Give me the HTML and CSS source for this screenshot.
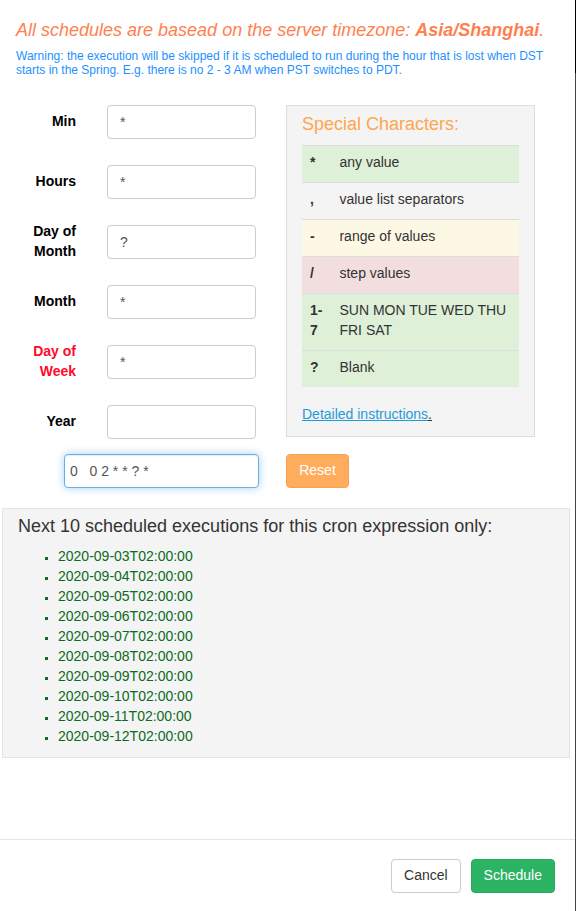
FILE: index.html
```html
<!DOCTYPE html>
<html>
<head>
<meta charset="utf-8">
<title>Cron schedule</title>
<link rel="stylesheet" href="styles.css">
</head>
<body>
<div class="page">
  <div class="modal">
    <div class="modal-body">
      <p class="tz">All schedules are basead on the server timezone: <b>Asia/Shanghai</b>.</p>
      <p class="warn">Warning: the execution will be skipped if it is scheduled to run during the hour that is lost when DST starts in the Spring. E.g. there is no 2 - 3 AM when PST switches to PDT.</p>

      <div class="editor">
        <div class="fields">
          <div class="field"><label class="lbl">Min</label><input class="box" value="*"></div>
          <div class="field"><label class="lbl">Hours</label><input class="box" value="*"></div>
          <div class="field"><label class="lbl">Day of Month</label><input class="box" value="?"></div>
          <div class="field"><label class="lbl">Month</label><input class="box" value="*"></div>
          <div class="field"><label class="lbl dow">Day of Week</label><input class="box" value="*"></div>
          <div class="field"><label class="lbl">Year</label><input class="box" value=""></div>
        </div>

        <div class="special">
          <h3 class="special-title">Special Characters:</h3>
          <table class="chars">
            <tr class="ok"><td class="sym">*</td><td>any value</td></tr>
            <tr><td class="sym">,</td><td>value list separators</td></tr>
            <tr class="warnrow"><td class="sym">-</td><td>range of values</td></tr>
            <tr class="bad"><td class="sym">/</td><td>step values</td></tr>
            <tr class="ok"><td class="sym">1-7</td><td>SUN MON TUE WED THU FRI SAT</td></tr>
            <tr class="ok"><td class="sym">?</td><td>Blank</td></tr>
          </table>
          <a class="doc-link" href="#">Detailed instructions<span class="dot">.</span></a>
        </div>
      </div>

      <div class="expr-row">
        <input class="expr" value="0   0 2 * * ? *">
        <button class="btn btn-reset">Reset</button>
      </div>

      <div class="next">
        <h3 class="next-title">Next 10 scheduled executions for this cron expression only:</h3>
        <ul class="runs">
          <li>2020-09-03T02:00:00</li>
          <li>2020-09-04T02:00:00</li>
          <li>2020-09-05T02:00:00</li>
          <li>2020-09-06T02:00:00</li>
          <li>2020-09-07T02:00:00</li>
          <li>2020-09-08T02:00:00</li>
          <li>2020-09-09T02:00:00</li>
          <li>2020-09-10T02:00:00</li>
          <li>2020-09-11T02:00:00</li>
          <li>2020-09-12T02:00:00</li>
        </ul>
      </div>
    </div>

    <div class="modal-footer">
      <button class="btn btn-default">Cancel</button>
      <button class="btn btn-success">Schedule</button>
    </div>
  </div>
  <div class="edge"></div>
</div>
</body>
</html>
```

FILE: styles.css
```css
html, body {
  margin: 0;
  padding: 0;
}

body {
  font-family: "Liberation Sans", Arial, sans-serif;
  font-size: 14px;
  line-height: 20px;
  color: #333;
  background: #fff;
}

.page {
  display: flex;
  height: 911px;
}

.modal {
  width: 575px;
  height: 911px;
  display: flex;
  flex-direction: column;
  background: #fff;
}

.edge {
  width: 1px;
  background: linear-gradient(#000 0, #000 73px, #444 73px, #444 100%);
}

.modal-body {
  flex: 1;
}

.tz {
  margin: 20px 0 0 16px;
  font-size: 18px;
  line-height: 21px;
  font-style: italic;
  color: #ff7f50;
}

.tz b {
  font-weight: bold;
}

.warn {
  margin: 8px 16px 0 16px;
  font-size: 12px;
  line-height: 14px;
  color: #1e90ff;
}

.editor {
  display: flex;
  align-items: flex-start;
  margin-top: 28px;
}

.fields {
  width: 270px;
  display: flex;
  flex-direction: column;
  gap: 26px;
}

.field {
  display: flex;
  align-items: center;
  height: 34px;
}

.lbl {
  width: 76px;
  padding-bottom: 2px;
  text-align: right;
  font-weight: bold;
  color: #000;
}

.lbl.dow {
  color: #ff0a2a;
}

.box {
  margin-left: 31px;
  width: 149px;
  height: 34px;
  box-sizing: border-box;
  border: 1px solid #ccc;
  border-radius: 4px;
  padding: 6px 12px;
  font-family: "Liberation Sans", Arial, sans-serif;
  font-size: 14px;
  color: #555;
  background: #fff;
  outline: none;
}

.special {
  margin-left: 16px;
  width: 249px;
  box-sizing: border-box;
  border: 1px solid #ddd;
  background: #f4f4f4;
  padding: 8px 15px 12px;
}

.special-title {
  margin: 0 0 11px;
  font-size: 18px;
  line-height: 20px;
  font-weight: normal;
  color: #ffa64d;
}

.chars {
  width: 217px;
  border-collapse: collapse;
  border-spacing: 0;
}

.chars td {
  padding: 6px 8px 10px;
  border-top: 1px solid #ddd;
  vertical-align: top;
  line-height: 20px;
}

.chars td.sym {
  width: 12px;
  padding-right: 9px;
  font-weight: bold;
}

.chars tr.ok {
  background: #dff0d8;
}

.chars tr.warnrow {
  background: #fcf8e3;
}

.chars tr.bad {
  background: #f2dede;
}

.doc-link {
  display: inline-block;
  margin-top: 17px;
  color: #1f9bd6;
  text-decoration: underline;
}

.doc-link .dot {
  color: #333;
  text-decoration: underline;
}

.expr-row {
  display: flex;
  margin-top: 15px;
  padding-left: 64px;
}

.expr {
  width: 195px;
  height: 34px;
  box-sizing: border-box;
  border: 1px solid #66afe9;
  border-radius: 4px;
  padding: 6px 5px;
  font-family: "Liberation Sans", Arial, sans-serif;
  font-size: 14px;
  color: #555;
  background: #fff;
  outline: none;
  box-shadow: inset 0 1px 1px rgba(0, 0, 0, 0.075), 0 0 8px rgba(102, 175, 233, 0.6);
}

.btn {
  height: 34px;
  box-sizing: border-box;
  padding: 5px 12px 7px;
  border: 1px solid transparent;
  border-radius: 4px;
  font-family: "Liberation Sans", Arial, sans-serif;
  font-size: 14px;
  line-height: 20px;
  cursor: pointer;
}

.btn-reset {
  margin-left: 27px;
  width: 63px;
  background: #ffad5c;
  border-color: #f9a24d;
  color: #fff;
}

.next {
  margin: 20px 0 0 2px;
  width: 568px;
  box-sizing: border-box;
  border: 1px solid #e3e3e3;
  background: #f4f4f4;
  padding: 7px 15px 11px;
}

.next-title {
  margin: 0 0 10px;
  font-size: 18px;
  line-height: 20px;
  font-weight: normal;
  color: #333;
}

.runs {
  margin: 0;
  padding-left: 40px;
  list-style: none;
  color: #0b6b22;
}

.runs li::before {
  content: "";
  display: inline-block;
  width: 3px;
  height: 3px;
  margin-left: -13px;
  margin-right: 10px;
  vertical-align: 1px;
  background: #0b6b22;
}

.modal-footer {
  display: flex;
  justify-content: flex-end;
  gap: 10px;
  border-top: 1px solid #e5e5e5;
  padding: 19px 20px 18px;
}

.btn-default {
  background: #fff;
  border-color: #ccc;
  color: #333;
}

.btn-success {
  background: #2bb463;
  border-color: #26a85a;
  color: #fff;
}
```
